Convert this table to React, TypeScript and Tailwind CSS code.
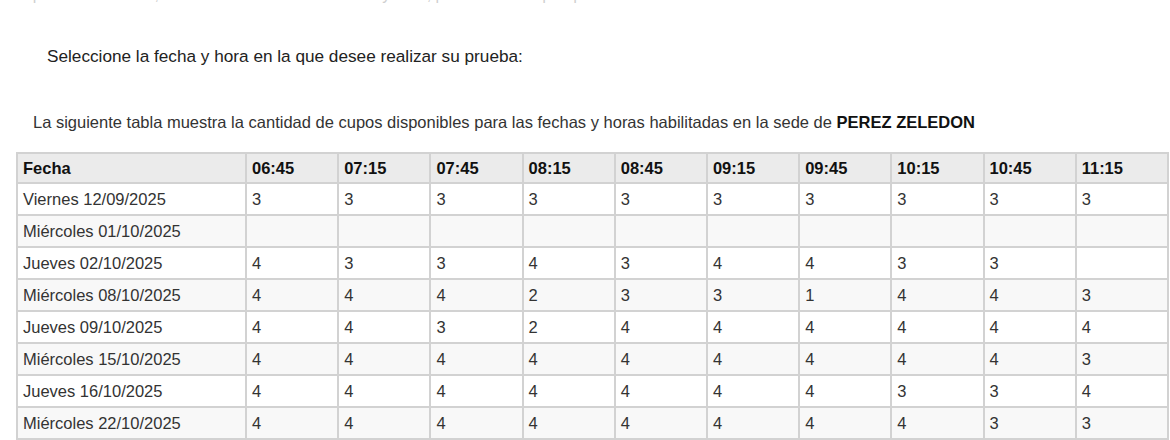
const TIMES = ['06:45', '07:15', '07:45', '08:15', '08:45', '09:15', '09:45', '10:15', '10:45', '11:15']

const ROWS: { fecha: string; cupos: string[] }[] = [
  { fecha: 'Viernes 12/09/2025', cupos: ['3', '3', '3', '3', '3', '3', '3', '3', '3', '3'] },
  { fecha: 'Miércoles 01/10/2025', cupos: ['', '', '', '', '', '', '', '', '', ''] },
  { fecha: 'Jueves 02/10/2025', cupos: ['4', '3', '3', '4', '3', '4', '4', '3', '3', ''] },
  { fecha: 'Miércoles 08/10/2025', cupos: ['4', '4', '4', '2', '3', '3', '1', '4', '4', '3'] },
  { fecha: 'Jueves 09/10/2025', cupos: ['4', '4', '3', '2', '4', '4', '4', '4', '4', '4'] },
  { fecha: 'Miércoles 15/10/2025', cupos: ['4', '4', '4', '4', '4', '4', '4', '4', '4', '3'] },
  { fecha: 'Jueves 16/10/2025', cupos: ['4', '4', '4', '4', '4', '4', '4', '3', '3', '4'] },
  { fecha: 'Miércoles 22/10/2025', cupos: ['4', '4', '4', '4', '4', '4', '4', '4', '3', '3'] },
]

export default function App() {
  return (
    <div className="w-[1170px] h-[440px] overflow-hidden bg-white font-['Liberation_Sans',Arial,sans-serif] text-[#333]">
      {/* line above, cut off by the screenshot */}
      <div className="h-[4px] overflow-hidden flex items-end pl-[22px]">
        <p className="text-[16px] leading-[18px] text-[#d0d0d0] whitespace-nowrap">
          Apreciable usuario, una vez seleccionada la fecha y hora, por favor verifique que los datos sean correctos.
        </p>
      </div>

      <p className="mt-[42px] pl-[47px] text-[17.2px] leading-[20px] text-[#222]">
        Seleccione la fecha y hora en la que desee realizar su prueba:
      </p>

      <p className="mt-[47px] pl-[33px] text-[16.5px] leading-[19px] text-[#333]">
        La siguiente tabla muestra la cantidad de cupos disponibles para las fechas y horas habilitadas en la sede de{' '}
        <b className="text-[#111]">PEREZ ZELEDON</b>
      </p>

      <div className="mt-[20px] pl-[16px]">
        <table className="w-[1153px] table-fixed border-collapse text-[16.5px] leading-[19px]">
          <colgroup>
            <col className="w-[229px]" />
            {TIMES.map((t) => (
              <col key={t} />
            ))}
          </colgroup>
          <thead>
            <tr className="bg-[#ebebeb]">
              <th className="h-[30px] border-2 border-[#d2d2d2] px-[5px] text-left font-bold text-[#111]">Fecha</th>
              {TIMES.map((t) => (
                <th key={t} className="h-[30px] border-2 border-[#d2d2d2] px-[5px] text-left font-bold text-[#111]">
                  {t}
                </th>
              ))}
            </tr>
          </thead>
          <tbody>
            {ROWS.map((row, i) => (
              <tr key={row.fecha} className={i % 2 === 1 ? 'bg-[#f8f8f8]' : 'bg-white'}>
                <td className="h-[32px] border-2 border-[#d2d2d2] px-[5px] text-[#333]">{row.fecha}</td>
                {row.cupos.map((c, j) => (
                  <td key={j} className="h-[32px] border-2 border-[#d2d2d2] px-[5px] text-[#333]">
                    {c}
                  </td>
                ))}
              </tr>
            ))}
          </tbody>
        </table>
      </div>
    </div>
  )
}
